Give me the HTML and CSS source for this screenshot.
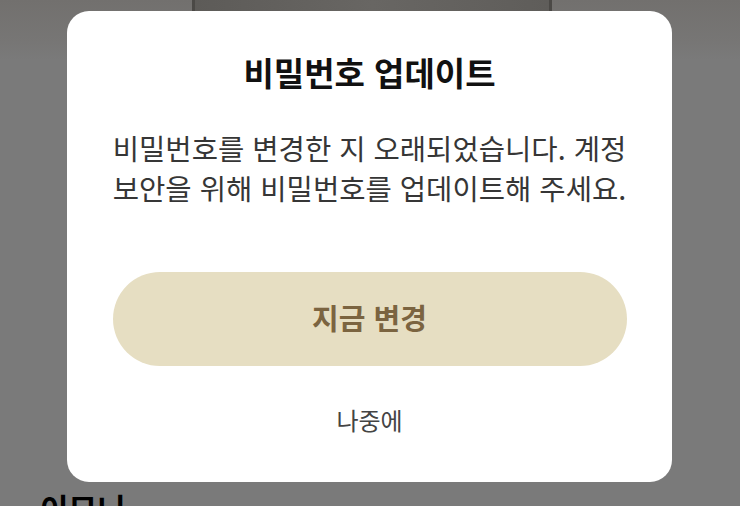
FILE: index.html
```html
<!DOCTYPE html>
<html lang="ko">
<head>
<meta charset="utf-8">
<link rel="stylesheet" href="styles.css">
</head>
<body>
<div class="page">
  <div class="hero"><div class="frame"></div></div>
  <div class="spacer"></div>
  <h2 class="section-title">이모니</h2>
</div>
<div class="scrim">
  <div class="dialog">
    <h1 class="dialog-title">비밀번호 업데이트</h1>
    <p class="dialog-text">비밀번호를 변경한 지 오래되었습니다. 계정 보안을 위해 비밀번호를 업데이트해 주세요.</p>
    <button class="btn-primary">지금 변경</button>
    <button class="btn-later">나중에</button>
  </div>
</div>
</body>
</html>
```
FILE: styles.css
```css
html, body {
  margin: 0;
  padding: 0;
  width: 740px;
  height: 506px;
  overflow: hidden;
  font-family: "Noto Sans CJK KR", "Noto Sans", sans-serif;
  background: #7a7a7a;
}
.page {
  display: flex;
  flex-direction: column;
  height: 506px;
}
.hero {
  height: 60px;
  background: linear-gradient(#72706e, #777675 70%, #7a7a7a);
  display: flex;
  padding-left: 192px;
}
.frame {
  width: 354px;
  height: 60px;
  background: linear-gradient(90deg, #5d5b58, #686663 50%, #5f5d5a);
  border-left: 3px solid #4b4946;
  border-right: 3px solid #4b4946;
}
.spacer { flex: 1; }
.section-title {
  margin: 0 0 0 40px;
  height: 13px;
  font-size: 31px;
  line-height: 30px;
  font-weight: 700;
  color: #000;
  overflow: visible;
}
.scrim {
  position: fixed;
  inset: 0;
}
.dialog {
  position: absolute;
  left: 67px;
  top: 11px;
  width: 605px;
  height: 471px;
  box-sizing: border-box;
  background: #fff;
  border-radius: 22px;
  display: flex;
  flex-direction: column;
  align-items: center;
  padding: 41px 44px 0;
}
.dialog-title {
  margin: 0;
  font-size: 33px;
  line-height: 40px;
  font-weight: 700;
  color: #111;
}
.dialog-text {
  margin: 36px 0 0;
  font-size: 28.6px;
  line-height: 40px;
  color: #363636;
  text-align: center;
  word-break: keep-all;
  width: 100%;
}
.btn-primary {
  margin-top: 64px;
  width: 514px;
  height: 94px;
  border: none;
  border-radius: 47px;
  background: #e6dec2;
  color: #7b6440;
  font-family: inherit;
  font-size: 29px;
  line-height: 40px;
  font-weight: 700;
  padding: 0 0 4px;
}
.btn-later {
  margin-top: 34px;
  height: 40px;
  border: none;
  background: none;
  font-family: inherit;
  font-size: 24px;
  line-height: 40px;
  color: #444;
  padding: 0;
}
```
